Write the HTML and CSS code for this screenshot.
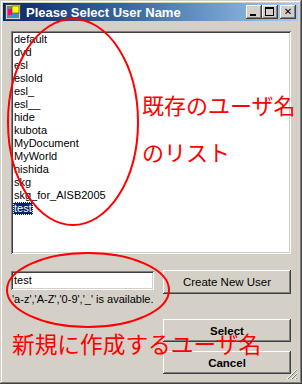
FILE: index.html
```html
<!DOCTYPE html>
<html lang="ja">
<head>
    <meta charset="UTF-8">
    <meta name="viewport" content="width=device-width, initial-scale=1.0">
    <title>Please Select User Name</title>
    <link rel="stylesheet" href="styles.css">
</head>
<body>
    <div class="window">
        <div class="titlebar">
            <svg class="app-icon" width="16" height="16" viewBox="0 0 16 16">
                <rect x="0.5" y="0.5" width="15" height="15" fill="#d4d0c8" stroke="#404040"/>
                <rect x="2" y="2" width="12" height="12" fill="#808080"/>
                <rect x="3" y="5" width="4" height="6" fill="#ff0080"/>
                <rect x="7" y="2" width="7" height="7" fill="#ffff00" stroke="#404040" stroke-width="0.6"/>
                <rect x="7" y="10" width="5" height="3" fill="#00a0ff"/>
            </svg>
            <span class="title">Please Select User Name</span>
            <div class="caption-buttons">
                <button class="cap-btn"><span class="glyph-min"></span></button>
                <button class="cap-btn"><span class="glyph-max"></span></button>
                <button class="cap-btn close">&#x2715;</button>
            </div>
        </div>

        <div class="client">
            <ul class="listbox">
                <li>default</li>
                <li>dvd</li>
                <li>esl</li>
                <li>eslold</li>
                <li>esl_</li>
                <li>esl__</li>
                <li>hide</li>
                <li>kubota</li>
                <li>MyDocument</li>
                <li>MyWorld</li>
                <li>nishida</li>
                <li>skg</li>
                <li>skg_for_AISB2005</li>
                <li><span class="selected">test</span></li>
            </ul>

            <div class="bottom">
                <div class="left-col">
                    <div class="textbox">test</div>
                    <p class="hint">'a-z','A-Z','0-9','_' is available.</p>
                </div>
                <div class="right-col">
                    <button class="btn create">Create New User</button>
                    <button class="btn bold select">Select</button>
                    <button class="btn bold">Cancel</button>
                </div>
            </div>
        </div>

        <svg class="grip" width="12" height="12" viewBox="0 0 12 12">
            <path d="M11 1L1 11M11 5L5 11M11 9L9 11" stroke="#ffffff" stroke-width="1"/>
            <path d="M11 2L2 11M11 6L6 11M11 10L10 11" stroke="#808080" stroke-width="1"/>
        </svg>
    </div>

    <!-- red hand-drawn notes on top of the dialog -->
    <svg class="notes" width="302" height="384" viewBox="0 0 302 384">
        <ellipse cx="73" cy="122" rx="65" ry="103" fill="none" stroke="#ff0000" stroke-width="2"/>
        <ellipse cx="88" cy="290" rx="81" ry="37" fill="none" stroke="#ff0000" stroke-width="2"/>
    </svg>
    <div class="note note-list">既存のユーザ名</div>
    <div class="note note-list2">のリスト</div>
    <div class="note note-new">新規に作成するユーザ名</div>
</body>
</html>
```

FILE: styles.css
```css
body {
    margin: 0;
    padding: 0;
    background-color: #d4d0c8;
    font-family: 'Liberation Sans', Arial, sans-serif;
    font-size: 11px;
    color: #000000;
    position: relative;
    width: 302px;
    height: 384px;
    overflow: hidden;
}

.window {
    position: relative;
    box-sizing: border-box;
    width: 302px;
    height: 384px;
    padding: 3px 4px 3px 3px;
    background-color: #d4d0c8;
    box-shadow: inset -1px -1px #404040, inset 1px 1px #d4d0c8,
                inset -2px -2px #808080, inset 2px 2px #ffffff;
}

.titlebar {
    display: flex;
    align-items: center;
    height: 18px;
    padding: 0 2px;
    background: linear-gradient(to right, #0a246a 0%, #3a6ea5 45%, #a6caf0 100%);
}

.app-icon {
    flex: none;
}

.title {
    margin-left: 5px;
    color: #ffffff;
    font-weight: bold;
    font-size: 13px;
    letter-spacing: 0px;
    flex: 1;
}

.caption-buttons {
    display: flex;
    gap: 0;
}

.cap-btn {
    width: 16px;
    height: 14px;
    padding: 0;
    border: none;
    background-color: #d4d0c8;
    box-shadow: inset -1px -1px #404040, inset 1px 1px #ffffff, inset -2px -2px #808080;
    position: relative;
    font-family: 'DejaVu Sans', sans-serif;
    font-size: 10px;
    font-weight: bold;
    line-height: 14px;
    color: #000000;
}

.cap-btn.close {
    margin-left: 2px;
}

.glyph-min {
    position: absolute;
    left: 4px;
    bottom: 3px;
    width: 6px;
    height: 2px;
    background: #000000;
}

.glyph-max {
    position: absolute;
    left: 3px;
    top: 2px;
    width: 7px;
    height: 6px;
    border: 1px solid #000000;
    border-top-width: 2px;
}

.client {
    padding: 10px 7px 0 8px;
}

.listbox {
    list-style: none;
    margin: 0;
    padding: 2px 2px;
    height: 223px;
    box-sizing: border-box;
    background-color: #ffffff;
    box-shadow: inset 1px 1px #808080, inset -1px -1px #ffffff,
                inset 2px 2px #404040, inset -2px -2px #d4d0c8;
}

.listbox li {
    height: 13px;
    line-height: 13px;
    padding-left: 1px;
    white-space: nowrap;
}

.selected {
    display: inline-block;
    padding: 0 1px;
    margin-left: -1px;
    background-color: #0a246a;
    color: #ffffff;
    outline: 1px dotted #ffffff;
    outline-offset: -1px;
}

.bottom {
    display: flex;
    gap: 9px;
    margin-top: 16px;
}

.left-col {
    width: 143px;
    padding-top: 1px;
}

.textbox {
    box-sizing: border-box;
    height: 19px;
    padding: 2px 3px;
    line-height: 14px;
    background-color: #ffffff;
    box-shadow: inset 1px 1px #808080, inset -1px -1px #ffffff,
                inset 2px 2px #404040, inset -2px -2px #d4d0c8;
}

.hint {
    margin: 3px 0 0 1px;
    line-height: 13px;
    white-space: nowrap;
}

.right-col {
    display: flex;
    flex-direction: column;
    width: 128px;
}

.btn {
    box-sizing: border-box;
    height: 23px;
    padding: 0;
    border: none;
    background-color: #d4d0c8;
    box-shadow: inset -1px -1px #404040, inset 1px 1px #ffffff, inset -2px -2px #808080;
    font-family: 'Liberation Sans', Arial, sans-serif;
    font-size: 11.5px;
    color: #000000;
}

.btn.create {
    height: 24px;
}

.btn.bold {
    font-weight: bold;
    margin-top: 9px;
}

.btn.select {
    margin-top: 25px;
}

.grip {
    position: absolute;
    right: 4px;
    bottom: 4px;
}

.notes {
    position: absolute;
    left: 0;
    top: 0;
    pointer-events: none;
}

.note {
    position: absolute;
    color: #ff0000;
    font-family: 'Noto Sans CJK JP', sans-serif;
    line-height: 1;
    white-space: nowrap;
}

.note-list {
    left: 142px;
    top: 93px;
    font-size: 22px;
}

.note-list2 {
    left: 142px;
    top: 140px;
    font-size: 22px;
}

.note-new {
    left: 12px;
    top: 333px;
    font-size: 22.7px;
}
```
